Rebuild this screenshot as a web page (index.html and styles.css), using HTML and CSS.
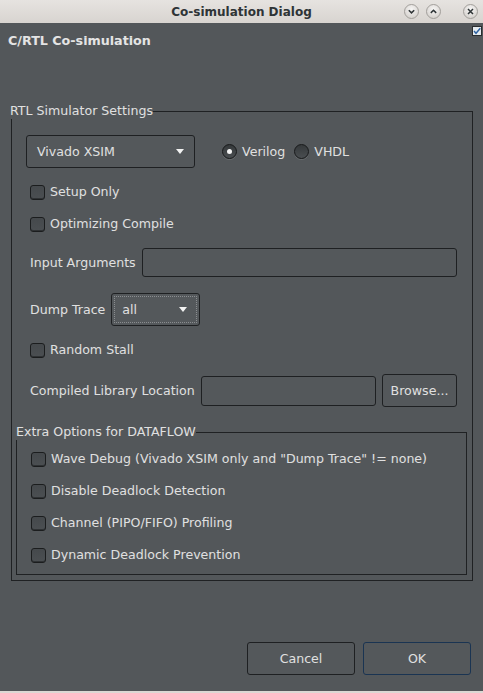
FILE: index.html
```html
<!DOCTYPE html>
<html>
<head>
<meta charset="utf-8">
<link rel="stylesheet" href="styles.css">
</head>
<body>
<div class="window">
  <div class="titlebar">
    <span></span>
    <span class="title">Co-simulation Dialog</span>
    <div class="wbtns">
      <svg class="wbtn" width="15" height="15" viewBox="0 0 15 15"><defs><radialGradient id="g1" cx="50%" cy="35%" r="65%"><stop offset="0" stop-color="#f7f6f5"/><stop offset="1" stop-color="#d4d0cc"/></radialGradient></defs><circle cx="7.5" cy="7.5" r="7" fill="url(#g1)" stroke="#a29f9b"/><path d="M4.8 6.2 L7.5 8.9 L10.2 6.2" fill="none" stroke="#2e3436" stroke-width="1.5"/></svg>
      <svg class="wbtn" width="15" height="15" viewBox="0 0 15 15"><circle cx="7.5" cy="7.5" r="7" fill="url(#g1)" stroke="#a29f9b"/><path d="M4.8 8.9 L7.5 6.2 L10.2 8.9" fill="none" stroke="#2e3436" stroke-width="1.5"/></svg>
      <svg class="wbtn close" width="15" height="15" viewBox="0 0 15 15"><circle cx="7.5" cy="7.5" r="7" fill="url(#g1)" stroke="#a29f9b"/><path d="M5 5 L10 10 M10 5 L5 10" fill="none" stroke="#2e3436" stroke-width="1.5"/></svg>
    </div>
  </div>
  <div class="content">
    <div class="header">
      <span class="heading">C/RTL Co-simulation</span>
      <svg class="mini-check" width="10" height="10" viewBox="0 0 10 10"><rect x="0.5" y="0.5" width="9" height="9" fill="#e4eaee" stroke="#2a2d2f"/><path d="M2 5 L4 7.3 L8.3 2.2" fill="none" stroke="#2f64a3" stroke-width="1.4"/></svg>
    </div>

    <fieldset class="group outer">
      <legend>RTL Simulator Settings</legend>
      <div class="group-body outer-body">
        <div class="row sim-row">
          <div class="combo combo-sim"><span class="combo-text">Vivado XSIM</span><span class="arrow"></span></div>
          <label class="radio"><span class="rb checked"></span>Verilog</label>
          <label class="radio"><span class="rb"></span>VHDL</label>
        </div>
        <label class="check first"><span class="cb"></span>Setup Only</label>
        <label class="check"><span class="cb"></span>Optimizing Compile</label>
        <div class="row field-row args-row">
          <span class="lbl">Input Arguments</span>
          <div class="input grow"></div>
        </div>
        <div class="row field-row dump-row">
          <span class="lbl">Dump Trace</span>
          <div class="combo combo-dump"><div class="focus"><span class="combo-text">all</span><span class="arrow"></span></div></div>
        </div>
        <label class="check spaced"><span class="cb"></span>Random Stall</label>
        <div class="row field-row lib-row">
          <span class="lbl">Compiled Library Location</span>
          <div class="input grow lib-input"></div>
          <div class="btn browse">Browse...</div>
        </div>

        <fieldset class="group inner">
          <legend>Extra Options for DATAFLOW</legend>
          <div class="group-body inner-body">
            <label class="check"><span class="cb"></span>Wave Debug (Vivado XSIM only and "Dump Trace" != none)</label>
            <label class="check"><span class="cb"></span>Disable Deadlock Detection</label>
            <label class="check"><span class="cb"></span>Channel (PIPO/FIFO) Profiling</label>
            <label class="check"><span class="cb"></span>Dynamic Deadlock Prevention</label>
          </div>
        </fieldset>
      </div>
    </fieldset>

    <div class="footer">
      <div class="btn action">Cancel</div>
      <div class="btn action ok">OK</div>
    </div>
  </div>
</div>
</body>
</html>
```
FILE: styles.css
```css
* { box-sizing: border-box; }

body {
  margin: 0;
  background: #dcd8d4;
  font-family: "DejaVu Sans", sans-serif;
  font-size: 12.6px;
  color: #e0e0e0;
}

.window {
  width: 483px;
  height: 693px;
  display: flex;
  flex-direction: column;
  overflow: hidden;
}

.titlebar {
  height: 23px;
  flex: none;
  display: grid;
  grid-template-columns: 1fr auto 1fr;
  align-items: center;
  background: linear-gradient(#e6e3e0, #d8d4d0);
}

.title {
  font-weight: bold;
  font-size: 12px;
  color: #2e3436;
  line-height: 16px;
}

.wbtns {
  display: flex;
  justify-content: flex-end;
  align-items: center;
  gap: 7px;
  padding-right: 5px;
}

.wbtn { display: block; }
.wbtn.close { margin-left: 15px; }

.content {
  flex: 1;
  background: #53575a;
  border-bottom: 2px solid #dcd8d4;
  display: flex;
  flex-direction: column;
}

.header {
  height: 80px;
  flex: none;
  display: flex;
  justify-content: space-between;
  align-items: flex-start;
  padding: 3px 1px 0 8px;
}

.heading {
  margin-top: 7px;
  line-height: 16px;
  font-weight: bold;
  font-size: 12.7px;
  color: #e4e4e4;
}

.mini-check { display: block; }

.group {
  margin: 0;
  padding: 0;
  border: 1px solid #1f2123;
  border-radius: 0;
  min-width: 0;
}

.group legend {
  padding: 0;
  line-height: 16px;
  color: #e0e0e0;
}

.outer {
  margin: 0 10px 0 11px;
}

.outer legend { margin-left: -2px; }

.outer-body {
  padding: 16px 15px 5px 14px;
}

.inner {
  margin: 17px -10px 0 -10px;
}

.inner legend { margin-left: -1px; }

.inner-body {
  padding: 3px 14px 3px 14px;
}

.row {
  display: flex;
  align-items: center;
}

.sim-row { height: 33px; }

.combo {
  height: 33px;
  border: 1px solid #1e2022;
  border-radius: 3px;
  display: flex;
  align-items: center;
  background: #54585b;
}

.combo-sim {
  width: 169px;
  padding-left: 10px;
  padding-right: 10px;
}

.combo-text { line-height: 16px; }

.arrow {
  margin-left: auto;
  width: 0;
  height: 0;
  border-left: 4.5px solid transparent;
  border-right: 4.5px solid transparent;
  border-top: 5px solid #f2f2f2;
}

.radio {
  display: flex;
  align-items: center;
  gap: 5px;
  line-height: 16px;
}

.sim-row .radio:first-of-type { margin-left: 27px; }
.sim-row .radio + .radio { margin-left: 9px; }

.rb {
  width: 15px;
  height: 15px;
  border-radius: 50%;
  border: 1px solid #17191a;
  background: linear-gradient(#35393b, #4a4e51);
  box-shadow: 0 1px 0 rgba(255,255,255,0.12);
  display: flex;
  align-items: center;
  justify-content: center;
}

.rb.checked::after {
  content: "";
  width: 5px;
  height: 5px;
  border-radius: 50%;
  background: #f4f4f4;
}

.check {
  display: flex;
  align-items: center;
  gap: 5px;
  height: 32px;
  line-height: 16px;
}

.outer-body > .check { padding-left: 4px; }
.outer-body > .check.first { margin-top: 8px; }
.outer-body > .check.spaced { margin-top: 8px; }
.inner-body > .check { padding-left: 0; }

.cb {
  width: 15px;
  height: 15px;
  flex: none;
  border: 1px solid #1b1d1e;
  border-radius: 3px;
  background: linear-gradient(#45494c, #4b4f52);
  box-shadow: inset 0 -1px 0 #2f3234;
}

.field-row { padding-left: 4px; }

.lbl { line-height: 16px; white-space: nowrap; }

.input {
  border: 1px solid #1e2022;
  border-radius: 3px;
  background: #54585b;
}

.grow { flex: 1; }

.args-row { margin-top: 8px; height: 29px; }
.args-row .input { height: 29px; margin-left: 6px; }

.dump-row { margin-top: 16px; height: 33px; }

.combo-dump {
  width: 89px;
  margin-left: 6px;
  padding: 2px;
}

.focus {
  flex: 1;
  height: 100%;
  border: 1px dotted #8a8d90;
  display: flex;
  align-items: center;
  padding-left: 7px;
  padding-right: 9px;
}

.lib-row { margin-top: 8px; height: 33px; }
.lib-input { height: 30px; margin-left: 6px; }

.btn {
  border: 1px solid #1e2022;
  border-radius: 3px;
  background: #54585b;
  display: flex;
  align-items: center;
  justify-content: center;
  line-height: 16px;
}

.browse {
  width: 75px;
  height: 33px;
  margin-left: 6px;
}

.footer {
  margin-top: 61px;
  display: flex;
  justify-content: flex-end;
  gap: 8px;
  padding-right: 12px;
}

.action {
  width: 108px;
  height: 33px;
}

.ok { border-color: #1a3452; }
```
